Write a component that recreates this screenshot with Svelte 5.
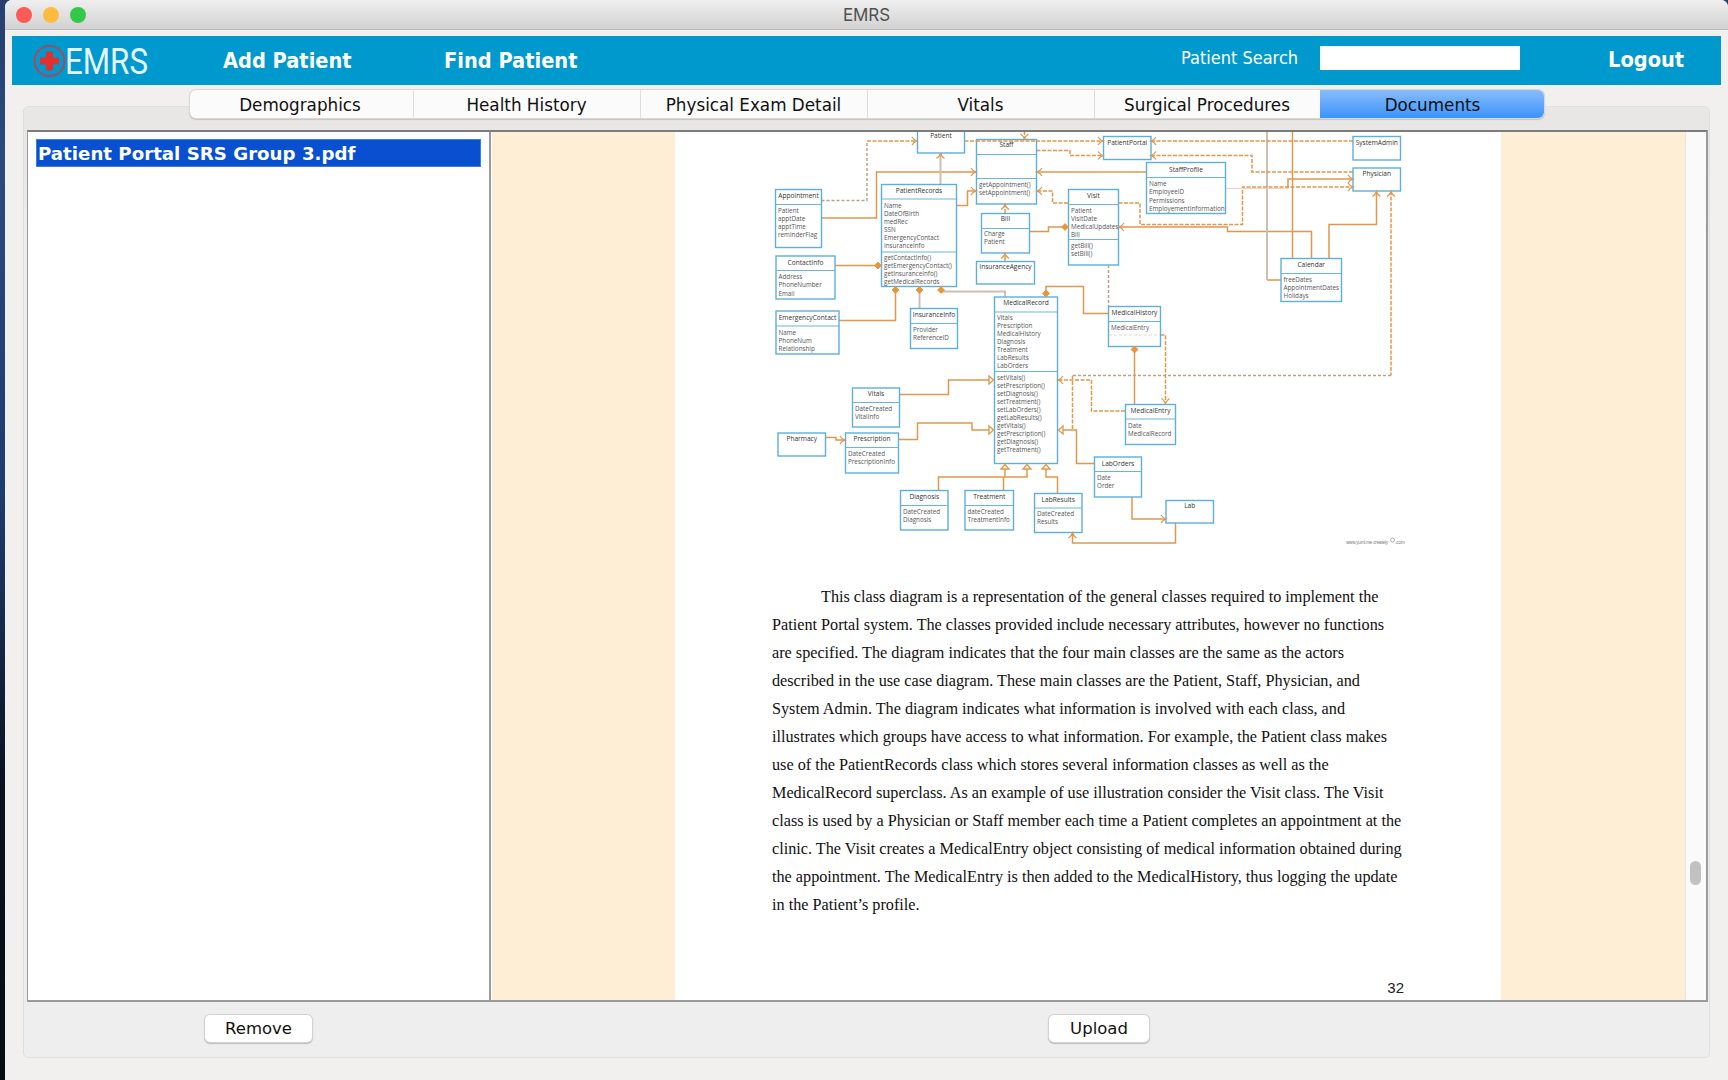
<script>
  const tabs = ['Demographics', 'Health History', 'Physical Exam Detail', 'Vitals', 'Surgical Procedures', 'Documents'];

  // Class boxes: position, title baseline centre, divider heights and member rows
  const boxes = [
    { x: 917.5, y: 125, r: 964.5, b: 153, t: 'Patient', ty: 136 },
    { x: 976.5, y: 139.5, r: 1036.5, b: 204, t: 'Staff', ty: 145, d: [154.5, 178.5], rows: [[185, 'getAppointment()'], [193, 'setAppointment()']] },
    { x: 881.5, y: 184.5, r: 956.5, b: 286.5, t: 'PatientRecords', ty: 190.5, d: [199, 252], rows: [[205.5, 'Name'], [213.5, 'DateOfBirth'], [221.5, 'medRec'], [229.5, 'SSN'], [237.5, 'EmergencyContact'], [245.5, 'InsuranceInfo'], [257.5, 'getContactInfo()'], [265.5, 'getEmergencyContact()'], [273.5, 'getInsuranceInfo()'], [281.5, 'getMedicalRecords']] },
    { x: 775.5, y: 189.5, r: 821.5, b: 247.5, t: 'Appointment', ty: 196, d: [204.5], rows: [[210.5, 'Patient'], [218.5, 'apptDate'], [226.5, 'apptTime'], [234.5, 'reminderFlag']] },
    { x: 776, y: 256, r: 835, b: 299, t: 'ContactInfo', ty: 262.5, d: [270.5], rows: [[277, 'Address'], [285, 'PhoneNumber'], [293.5, 'Email']] },
    { x: 776, y: 311, r: 839, b: 354, t: 'EmergencyContact', ty: 317.5, d: [326], rows: [[332.5, 'Name'], [340.5, 'PhoneNum'], [348.5, 'Relationship']] },
    { x: 910.5, y: 308.5, r: 957.5, b: 348.5, t: 'InsuranceInfo', ty: 315, d: [323.5], rows: [[330, 'Provider'], [338, 'ReferenceID']] },
    { x: 981.5, y: 213.5, r: 1029.5, b: 253, t: 'Bill', ty: 219, d: [228.5], rows: [[234, 'Charge'], [242, 'Patient']] },
    { x: 976.5, y: 261.5, r: 1034.5, b: 284, t: 'InsuranceAgency', ty: 267 },
    { x: 994.5, y: 297, r: 1057.5, b: 463.5, t: 'MedicalRecord', ty: 303, d: [312, 371.5], rows: [[317.5, 'Vitals'], [325.7, 'Prescription'], [333.7, 'MedicalHistory'], [341.7, 'Diagnosis'], [349.7, 'Treatment'], [357.7, 'LabResults'], [365.7, 'LabOrders'], [377.5, 'setVitals()'], [385.7, 'setPrescription()'], [393.7, 'setDiagnosis()'], [401.7, 'setTreatment()'], [409.7, 'setLabOrders()'], [417.7, 'getLabResults()'], [425.7, 'getVitals()'], [433.7, 'getPrescription()'], [441.7, 'getDiagnosis()'], [449.7, 'getTreatment()']] },
    { x: 1068.5, y: 189.5, r: 1118.5, b: 265, t: 'Visit', ty: 195.5, d: [204.5, 239.5], rows: [[210.5, 'Patient'], [218.5, 'VisitDate'], [226.5, 'MedicalUpdates'], [234.5, 'Bill'], [246, 'getBill()'], [254, 'setBill()']] },
    { x: 1103.5, y: 136.5, r: 1151, b: 159.5, t: 'PatientPortal', ty: 143 },
    { x: 1146.5, y: 162.5, r: 1225.5, b: 213.5, t: 'StaffProfile', ty: 169.3, d: [177.5], rows: [[184, 'Name'], [192, 'EmployeeID'], [200.3, 'Permissions'], [208.5, 'EmployementInformation']] },
    { x: 1108.5, y: 306.5, r: 1160.5, b: 346.5, t: 'MedicalHistory', ty: 312.7, d: [321.5], rows: [[327.5, 'MedicalEntry']] },
    { x: 1353, y: 136.5, r: 1400.5, b: 160, t: 'SystemAdmin', ty: 143 },
    { x: 1353, y: 168, r: 1400.5, b: 191, t: 'Physician', ty: 174 },
    { x: 1281, y: 258.5, r: 1341.5, b: 301.5, t: 'Calendar', ty: 265, d: [273.5], rows: [[279.5, 'freeDates'], [287.5, 'AppointmentDates'], [295.5, 'Holidays']] },
    { x: 852.5, y: 388, r: 899.5, b: 427, t: 'Vitals', ty: 394, d: [402.5], rows: [[408.5, 'DateCreated'], [416.5, 'VitalInfo']] },
    { x: 778, y: 433, r: 825.5, b: 456, t: 'Pharmacy', ty: 439 },
    { x: 845.5, y: 433, r: 898.5, b: 473, t: 'Prescription', ty: 439, d: [447.5], rows: [[454, 'DateCreated'], [462, 'PrescriptionInfo']] },
    { x: 900.5, y: 490.5, r: 948, b: 530, t: 'Diagnosis', ty: 496.5, d: [505.5], rows: [[511.5, 'DateCreated'], [519.5, 'Diagnosis']] },
    { x: 965, y: 490.5, r: 1013.5, b: 530, t: 'Treatment', ty: 496.5, d: [505.5], rows: [[511.5, 'dateCreated'], [519.5, 'TreatmentInfo']] },
    { x: 1034.5, y: 493.5, r: 1082, b: 532.5, t: 'LabResults', ty: 499.3, d: [508], rows: [[514, 'DateCreated'], [522, 'Results']] },
    { x: 1094.5, y: 457, r: 1141.5, b: 497, t: 'LabOrders', ty: 463.3, d: [471.5], rows: [[478, 'Date'], [486, 'Order']] },
    { x: 1125.5, y: 404.5, r: 1175.5, b: 444.5, t: 'MedicalEntry', ty: 410.5, d: [419], rows: [[425.5, 'Date'], [433.5, 'MedicalRecord']] },
    { x: 1166, y: 500.5, r: 1213.5, b: 523, t: 'Lab', ty: 506 }
  ];

  const solid = [
    'M1146 172H1037', 'M821.5 218H876.5V172H976', 'M956.5 205.5H967.5V191H976', 'M1005 261V253',
    'M1029.5 231.5H1048.5V227H1065', 'M1288 188.5V179H1353', 'M1311.5 258V231.5H1227.5V227H1119',
    'M1292.5 258V131', 'M1281 280H1267', 'M1329 258V224.5H1376.5V191', 'M835 265.5H878', 'M839 320.5H895.5V290',
    'M1108 313.5H1083.5V286.5H1046V293', 'M1134.5 404V349', 'M1094 463.5H1076.5V430H1063',
    'M899.5 394.5H948.5V380H989', 'M898.5 439.5H917.5V423H972V430H989', 'M825.5 437.5H836V440H845',
    'M938.5 491V477H1027V468', 'M1003.5 491V477M1005 477V468', 'M1057.5 493V477H1046V468',
    'M1132 497V519H1166', 'M1175.5 523V543H1072.5V533'
  ];
  const faded = ['M940.5 184V153', 'M919.5 308V290', 'M1005 297V291.5H941', 'M1267 280V131'];
  const dashed = [
    'M964.5 141H1103', 'M1024.5 131V139', 'M1036.5 150.5H1070V155.5H1103', 'M1353 141H1151',
    'M1353 172H1252V155.5H1151', 'M1068 203H1052.5V191H1037', 'M1005 213V204', 'M1118.5 203H1140V224.5H1242.5V187H1353',
    'M1391 191V375.5', 'M1072.5 375.5V430', 'M1160.5 335H1165.5V403', 'M1125 411H1091.5V380H1058', 'M867 141H917'
  ];
  const fadedDashed = ['M821.5 200.5H867V141', 'M1108.5 265V306', 'M1391 375.5H1072.5'];

  // [x, y, rotation]: the tip points right at 0 degrees
  const arrows = [
    [917, 141, 0], [1103, 141, 0], [1024.5, 139, 90], [1103, 155.5, 0], [1151, 141, 180], [1151, 155.5, 180],
    [1037, 172, 180], [976, 172, 0], [976, 191, 0], [940.5, 153.5, 270], [1037, 191, 180], [1005, 204.5, 270],
    [1005, 253.5, 270], [1353, 187, 0], [1353, 179, 0], [1119, 227, 180], [1376.5, 191.5, 270], [1391, 191.5, 270],
    [1165.5, 403.5, 90], [1058, 380, 180], [845, 440, 0], [1166, 519, 0], [1072.5, 533, 270]
  ];
  const triangles = [[994, 380, 0], [994, 430, 0], [1058, 430, 180], [1005, 464, 270], [1027, 464, 270], [1046, 464, 270]];
  const diamonds = [[878, 265.5], [895.5, 290], [919.5, 290], [941, 290], [1065, 227], [1046, 293.5], [1134.5, 349.5]];

  const lines = [
    'This class diagram is a representation of the general classes required to implement the',
    'Patient Portal system. The classes provided include necessary attributes, however no functions',
    'are specified. The diagram indicates that the four main classes are the same as the actors',
    'described in the use case diagram. These main classes are the Patient, Staff, Physician, and',
    'System Admin. The diagram indicates what information is involved with each class, and',
    'illustrates which groups have access to what information. For example, the Patient class makes',
    'use of the PatientRecords class which stores several information classes as well as the',
    'MedicalRecord superclass. As an example of use illustration consider the Visit class. The Visit',
    'class is used by a Physician or Staff member each time a Patient completes an appointment at the',
    'clinic. The Visit creates a MedicalEntry object consisting of medical information obtained during',
    'the appointment. The MedicalEntry is then added to the MedicalHistory, thus logging the update',
    'in the Patient’s profile.'
  ];
</script>

<div class="desktop">
  <div class="window">
    <div class="titlebar">
      <div class="lights"><i class="red"></i><i class="amber"></i><i class="green"></i></div>
      <span>EMRS</span>
    </div>

    <header>
      <svg class="logo" width="120" height="49" viewBox="0 0 120 49">
        <circle cx="16.5" cy="25" r="15" fill="none" stroke="#a8485a" stroke-width="2" />
        <path d="M13 15.500h7v6h6v7h-6v6h-7v-6h-6v-7h6z" fill="#e0302f" />
        <text x="32" y="38" textLength="83" lengthAdjust="spacingAndGlyphs">EMRS</text>
      </svg>
      <button class="nav add">Add Patient</button>
      <button class="nav find">Find Patient</button>
      <label for="search">Patient Search</label>
      <input id="search" type="text" />
      <button class="nav logout">Logout</button>
    </header>

    <div class="tabs">
      {#each tabs as tab, i}
        <button class="tab" class:active={i === 5}>{tab}</button>
      {/each}
    </div>

    <main>
      <div class="split">
        <div class="list"><div class="item">Patient Portal SRS Group 3.pdf</div></div>
        <div class="viewer">
          <div class="canvas">
            <article>
              <svg class="diagram" width="826" height="423" viewBox="675 132 826 423">
                <g class="wires">
                  {#each solid as d}<path {d} />{/each}
                  {#each faded as d}<path class="faded" {d} />{/each}
                  {#each dashed as d}<path class="dash" {d} />{/each}
                  {#each fadedDashed as d}<path class="dash faded-dash" {d} />{/each}
                  <path class="pale" d="M1225.500 188.500H1288" />
                </g>
                {#each boxes as b}
                  <g class="box">
                    <rect x={b.x} y={b.y} width={b.r - b.x} height={b.b - b.y} />
                    {#each b.d ?? [] as y}<path d="M{b.x} {y}H{b.r}" />{/each}
                    <text class="title" x={(b.x + b.r) / 2} y={b.ty + 2.2}>{b.t}</text>
                    {#each b.rows ?? [] as [y, label]}<text x={b.x + 2.5} y={y + 2.3}>{label}</text>{/each}
                  </g>
                {/each}
                <path class="pale dash" d="M1109 335H1160" />
                <path class="over" d="M976 141H1037" />
                {#each arrows as [x, y, a]}
                  <path class="arrow" d="M-5 -4Q-3 -1 0 0Q-3 1 -5 4" transform="translate({x} {y}) rotate({a})" />
                {/each}
                {#each triangles as [x, y, a]}
                  <path class="tri" d="M-5 -4L-.5 0L-5 4Z" transform="translate({x} {y}) rotate({a})" />
                {/each}
                {#each diamonds as [x, y]}
                  <path class="diamond" d="M-3.500 0L0 -3.500L3.500 0L0 3.500Z" transform="translate({x} {y})" />
                {/each}
                <text class="credit" x="1346" y="544" textLength="42">www.yuml.me creately</text>
                <circle class="bulb" cx="1392.500" cy="540" r="2" />
                <text class="credit" x="1395" y="544">.com</text>
              </svg>
              <div class="prose">
                {#each lines as line}<p>{line}</p>{/each}
              </div>
              <div class="folio">32</div>
            </article>
          </div>
          <div class="track"><div class="thumb"></div></div>
        </div>
      </div>
      <footer>
        <button class="push remove">Remove</button>
        <button class="push upload">Upload</button>
      </footer>
    </main>
  </div>
</div>

<style>
  :global(body) { margin: 0; overflow: hidden; }
  * { box-sizing: border-box; }
  button { border: 0; padding: 0; background: none; color: inherit; font: inherit; white-space: nowrap; }
  .desktop {
    width: 1728px; height: 1080px; padding-left: 5px;
    background: linear-gradient(#263f6d 0, #2b4a80 160px, #1d3c72 480px, #1a3158 580px, #0a1220 780px, #060d12 1080px);
    font-family: "DejaVu Sans", Verdana, sans-serif;
  }
  .window {
    height: 1080px; display: flex; flex-direction: column;
    background: #f1f0ee; border-radius: 7px 7px 0 0; overflow: hidden;
  }
  .titlebar {
    height: 30px; flex: none; display: grid; grid-template-columns: 1fr auto 1fr; align-items: center;
    padding: 0 11px 0 11px; background: linear-gradient(#efefef, #d2d2d2); border-bottom: 1px solid #bcbcbc;
    font: 17px Inter, Roboto, sans-serif; color: #505050;
  }
  .titlebar span { letter-spacing: -0.1px; padding-top: 1px; }
  .lights { display: flex; gap: 11px; }
  .lights i { width: 16px; height: 16px; border-radius: 50%; }
  .red { background: #fc5b57; } .amber { background: #fdbc40; } .green { background: #34c84a; }

  header {
    height: 49px; flex: none; margin: 6px 7px 0; display: flex; align-items: center;
    background: #0099ce; color: #fff;
  }
  .logo { margin: 0 0 0 21px; flex: none; }
  .logo text { font: 400 37.500px Roboto, sans-serif; fill: #e4f5fb; }
  .nav { font: bold 21.600px "DejaVu Sans Condensed", "DejaVu Sans", sans-serif; font-stretch: condensed; width: 134px; text-align: left; }
  .add { margin: 0 0 0 70px; }
  .find { margin: 0 0 0 87px; }
  header label { margin: -6px 0 0 603px; width: 139px; font: 18px "DejaVu Sans Condensed", "DejaVu Sans", sans-serif; font-stretch: condensed; white-space: nowrap; }
  header input { width: 200px; height: 24px; margin-top: -5px; border: 0; padding: 0; background: #fff; }
  .logout { margin: -2px 0 0 88px; width: 80px; }

  .tabs {
    position: relative; z-index: 1; flex: none; width: 1354px; height: 28px; margin: 5px 0 -12px 185px;
    display: grid; grid-template-columns: 223px 227px 227px 227px 226px 224px;
    background: #fbfbfb; border-radius: 6px; box-shadow: 0 0 0 1px #d9d8d6, 0 1px 1px 1px #c3c2c0;
  }
  .tab { font-size: 16.800px; color: #111; border-left: 1px solid #dedede; padding: 1px 1px 0 0; }
  .tab:first-child { border: 0; padding-right: 3px; }
  .tab.active { background: linear-gradient(#88bdfa, #3b93fc); border: 0; border-radius: 0 6px 6px 0; padding: 1px 0 0 1px; }

  main {
    width: 1687px; height: 952px; flex: none; margin-left: 18px; padding: 23px 1px 0 3px;
    border: 1px solid #e0dfdd; border-radius: 5px; background: linear-gradient(#e8e7e6 60px, #eee 130px);
  }
  .split {
    height: 872px; display: flex; border: 2px solid #9a9a9a; border-top-color: #7c7c7c; border-width: 2px 2px 2px 1px;
    background: #fff;
  }
  .list { width: 463px; flex: none; padding: 7px 8px 0; border-right: 2px solid #9b9b9b; }
  .item {
    height: 28px; line-height: 27px; padding-left: 1px; white-space: nowrap;
    background: #0850d0; border: 1px solid #3c7ee6; color: #fff; font-weight: bold; font-size: 18.200px;
  }
  .viewer { flex: 1; display: flex; padding-left: 1px; }
  .canvas { width: 1193px; background: #ffeed6; padding-left: 183px; }
  article { width: 826px; height: 868px; background: #fff; overflow: hidden; }
  .diagram { display: block; }
  .prose { padding: 28px 0 0 97px; font: 16.220px/28px "Liberation Serif", "Times New Roman", serif; color: #111; white-space: nowrap; }
  .prose p { margin: 0; }
  .prose p:first-child { text-indent: 49px; }
  .folio { margin: 60px 97px 0 0; text-align: right; font: 15px/18px "Liberation Sans", Arial, sans-serif; color: #222; }
  .track { flex: 1; padding: 729px 0 0 4px; background: #fafafa; border-left: 1px solid #e6e6e6; }
  .thumb { width: 11px; height: 24px; border-radius: 6px; background: #c1c1c1; }

  .wires path, .over { fill: none; stroke: #e0984c; stroke-width: 1.500; }
  .wires .faded { stroke: #cfbeb0; stroke-width: 2; }
  .wires .dash, .over { stroke-dasharray: 4 1.500; }
  .wires .faded-dash { stroke: #bba283; stroke-dasharray: 3 2; }
  .wires .pale, .pale { fill: none; stroke: #f3d3bd; stroke-width: 1; }
  .pale.dash { stroke-dasharray: 3 2; }
  .box rect { fill: #fff; stroke: #5db0dc; stroke-width: 1.400; }
  .box path { stroke: #69b5dc; stroke-width: 1.200; }
  .box text { font: 6.300px "Open Sans", sans-serif; fill: #555; }
  .box .title { text-anchor: middle; fill: #333; font-size: 6.600px; }
  .arrow { fill: none; stroke: #e0984c; stroke-width: 1.300; }
  .tri { fill: #fff; stroke: #e0984c; stroke-width: 1.300; }
  .diamond { fill: #e8943c; stroke: #e8943c; stroke-width: .8; }
  .credit { font: 4.500px "Liberation Sans", sans-serif; fill: #777; }
  .bulb { fill: none; stroke: #999; stroke-width: .8; }

  footer { display: flex; padding-top: 13px; }
  .push {
    height: 27px; background: #fff; border-radius: 5px; color: #111; font-size: 16.500px;
    box-shadow: 0 0 0 1px #d2d2d2, 0 1px 1px 1px #bcbcbc;
  }
  .remove { width: 107px; margin-left: 178px; }
  .upload { width: 100px; margin-left: 737px; }
</style>
